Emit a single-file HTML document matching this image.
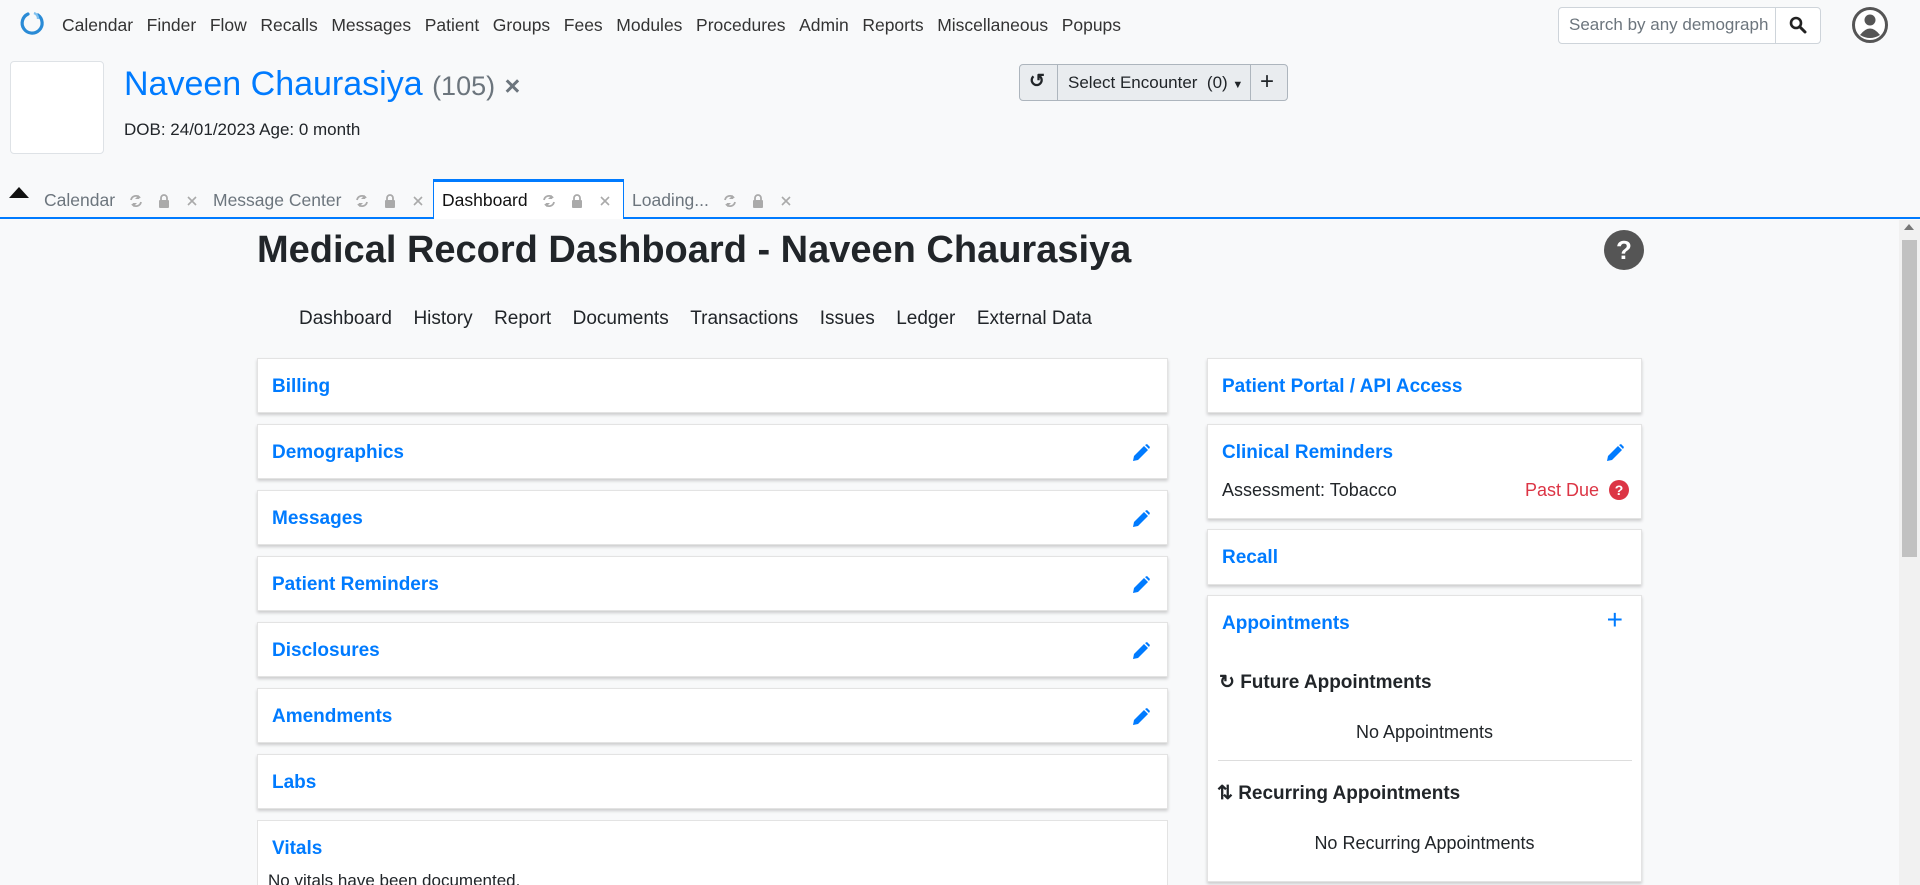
<!DOCTYPE html>
<html style="overflow:hidden;height:885px"><head><meta charset="utf-8"><style>
*{box-sizing:border-box;margin:0;padding:0}
body{width:1920px;height:885px;overflow:hidden;background:#f8f9fa;font-family:"Liberation Sans",sans-serif;color:#212529;position:relative}
.a{position:absolute;white-space:nowrap}
.nav span{margin-right:13.6px;font-size:17.5px;color:#333}
.card{position:absolute;background:#fff;border:1px solid #e3e3e3;box-shadow:0 2px 3px rgba(0,0,0,.18)}
.ct{position:absolute;left:14px;top:17px;font-size:19px;font-weight:bold;color:#007bff}
.pen{position:absolute;right:16px;top:18px}
.tab{position:absolute;top:190px;font-size:17.5px;color:#6c757d;display:flex;align-items:center}
.tab svg{margin-left:14px}
.sub span{margin-right:21.5px}
</style></head><body>
<svg width="0" height="0" style="position:absolute"><defs>
<g id="ref"><path d="M2 6 A5 5 0 0 1 11 4 M12 8 A5 5 0 0 1 3 10" fill="none" stroke="#aaa" stroke-width="1.8"/><path d="M10 1v4h-4z M4 13v-4h4z" fill="#aaa"/></g>
<g id="lock"><path d="M4 6V4a3 3 0 0 1 6 0v2" fill="none" stroke="#aaa" stroke-width="1.8"/><rect x="2" y="6" width="10" height="8" rx="1" fill="#aaa"/></g>
<g id="x"><path d="M3 3l8 8M11 3l-8 8" stroke="#aaa" stroke-width="1.6"/></g>
</defs></svg>
<svg class="a" style="left:19px;top:10px" width="26" height="26" viewBox="0 0 26 26"><path d="M9 4 A10 10 0 1 0 19 5" fill="none" stroke="#2a8bd6" stroke-width="3.2" stroke-linecap="round"/><path d="M15 3 A6 6 0 0 1 19 9" fill="none" stroke="#7fc0ee" stroke-width="2.4"/></svg>
<div class="a nav" style="left:62px;top:15px"><span>Calendar</span><span>Finder</span><span>Flow</span><span>Recalls</span><span>Messages</span><span>Patient</span><span>Groups</span><span>Fees</span><span>Modules</span><span>Procedures</span><span>Admin</span><span>Reports</span><span>Miscellaneous</span><span>Popups</span></div>
<div class="a" style="left:1558px;top:7px;width:263px;height:37px;border:1px solid #ced4da;border-radius:4px;background:#fff"></div>
<div class="a" style="left:1569px;top:15px;font-size:17px;color:#6c757d;width:200px;overflow:hidden">Search by any demograph</div>
<div class="a" style="left:1775px;top:7px;width:46px;height:37px;border-left:1px solid #ced4da"></div>
<svg class="a" style="left:1789px;top:16px" width="18" height="18" viewBox="0 0 18 18"><circle cx="7" cy="7" r="5" fill="none" stroke="#222" stroke-width="2.6"/><path d="M11 11l5 5" stroke="#222" stroke-width="3" stroke-linecap="round"/></svg>
<svg class="a" style="left:1851px;top:6px" width="38" height="38" viewBox="0 0 38 38"><circle cx="19" cy="19" r="16.5" fill="#fff" stroke="#555" stroke-width="3"/><circle cx="19" cy="14" r="5.5" fill="#555"/><path d="M9 29 Q19 16 29 29 Q19 35 9 29z" fill="#555"/></svg>
<div class="a" style="left:10px;top:61px;width:94px;height:93px;background:#fff;border:1px solid #dee2e6;border-radius:4px"></div>
<div class="a" style="left:124px;top:65px;font-size:34px;color:#007bff">Naveen Chaurasiya <span style="color:#6c757d;font-size:27px">(105)</span> <span style="color:#6c757d;font-size:27px;font-weight:bold">×</span></div>
<div class="a" style="left:124px;top:120px;font-size:17px">DOB: 24/01/2023 Age: 0 month</div>
<div class="a" style="left:1019px;top:64px;width:269px;height:37px;border:1px solid #adb5bd;border-radius:4px;background:#e9ecef"></div>
<div class="a" style="left:1057px;top:64px;height:37px;border-left:1px solid #adb5bd"></div>
<div class="a" style="left:1250px;top:64px;height:37px;border-left:1px solid #adb5bd"></div>
<div class="a" style="left:1029px;top:70px;font-size:19px;font-weight:bold">↺</div>
<div class="a" style="left:1068px;top:73px;font-size:17px">Select Encounter&nbsp; (0) <span style="font-size:11px">▼</span></div>
<div class="a" style="left:1260px;top:68px;font-size:24px">+</div>
<div class="a" style="left:0;top:217px;width:1920px;height:2px;background:#007bff"></div>
<div class="a" style="left:433px;top:179px;width:191px;height:40px;background:#fff;border:1px solid #007bff;border-top:3px solid #007bff;border-bottom:none"></div>
<div class="a" style="left:9px;top:187px;width:0;height:0;border-left:10px solid transparent;border-right:10px solid transparent;border-bottom:11px solid #111"></div>
<div class="tab" style="left:44px">Calendar<svg width="14" height="14"><use href="#ref"/></svg><svg width="14" height="14"><use href="#lock"/></svg><svg width="14" height="14"><use href="#x"/></svg></div>
<div class="tab" style="left:213px">Message Center<svg width="14" height="14"><use href="#ref"/></svg><svg width="14" height="14"><use href="#lock"/></svg><svg width="14" height="14"><use href="#x"/></svg></div>
<div class="tab" style="left:442px;color:#111">Dashboard<svg width="14" height="14"><use href="#ref"/></svg><svg width="14" height="14"><use href="#lock"/></svg><svg width="14" height="14"><use href="#x"/></svg></div>
<div class="tab" style="left:632px">Loading...<svg width="14" height="14"><use href="#ref"/></svg><svg width="14" height="14"><use href="#lock"/></svg><svg width="14" height="14"><use href="#x"/></svg></div>
<div class="a" style="left:1899px;top:220px;width:21px;height:665px;background:#f1f1f1"></div>
<div class="a" style="left:1902px;top:240px;width:15px;height:317px;background:#c1c1c1"></div>
<div class="a" style="left:1904px;top:224px;width:0;height:0;border-left:5px solid transparent;border-right:5px solid transparent;border-bottom:6px solid #777"></div>
<div class="a" style="left:257px;top:229px;font-size:38px;font-weight:600">Medical Record Dashboard - Naveen Chaurasiya</div>
<div class="a" style="left:1604px;top:230px;width:40px;height:40px;border-radius:50%;background:#555;color:#fff;font-size:26px;font-weight:bold;text-align:center;line-height:40px">?</div>
<div class="a sub" style="left:299px;top:308px;font-size:19px"><span>Dashboard</span><span>History</span><span>Report</span><span>Documents</span><span>Transactions</span><span>Issues</span><span>Ledger</span><span>External Data</span></div>
<div class="card" style="left:257px;top:358px;width:911px;height:55px"><div class="ct">Billing</div></div>
<div class="card" style="left:257px;top:424px;width:911px;height:55px"><div class="ct">Demographics</div><svg class="pen" width="20" height="20" viewBox="0 0 20 20"><path d="M2 18l1-5L13 3l4 4L7 17z M14 2l2-1 3 3-1 2z" fill="#007bff"/></svg></div>
<div class="card" style="left:257px;top:490px;width:911px;height:55px"><div class="ct">Messages</div><svg class="pen" width="20" height="20" viewBox="0 0 20 20"><path d="M2 18l1-5L13 3l4 4L7 17z M14 2l2-1 3 3-1 2z" fill="#007bff"/></svg></div>
<div class="card" style="left:257px;top:556px;width:911px;height:55px"><div class="ct">Patient Reminders</div><svg class="pen" width="20" height="20" viewBox="0 0 20 20"><path d="M2 18l1-5L13 3l4 4L7 17z M14 2l2-1 3 3-1 2z" fill="#007bff"/></svg></div>
<div class="card" style="left:257px;top:622px;width:911px;height:55px"><div class="ct">Disclosures</div><svg class="pen" width="20" height="20" viewBox="0 0 20 20"><path d="M2 18l1-5L13 3l4 4L7 17z M14 2l2-1 3 3-1 2z" fill="#007bff"/></svg></div>
<div class="card" style="left:257px;top:688px;width:911px;height:55px"><div class="ct">Amendments</div><svg class="pen" width="20" height="20" viewBox="0 0 20 20"><path d="M2 18l1-5L13 3l4 4L7 17z M14 2l2-1 3 3-1 2z" fill="#007bff"/></svg></div>
<div class="card" style="left:257px;top:754px;width:911px;height:55px"><div class="ct">Labs</div></div>
<div class="card" style="left:257px;top:820px;width:911px;height:65px;border-bottom:none;box-shadow:none"><div class="ct">Vitals</div><div class="a" style="left:10px;top:50px;font-size:17px">No vitals have been documented.</div></div>
<div class="card" style="left:1207px;top:358px;width:435px;height:55px"><div class="ct">Patient Portal / API Access</div></div>
<div class="card" style="left:1207px;top:424px;width:435px;height:95px"><div class="ct">Clinical Reminders</div><svg class="pen" width="20" height="20" viewBox="0 0 20 20"><path d="M2 18l1-5L13 3l4 4L7 17z M14 2l2-1 3 3-1 2z" fill="#007bff"/></svg>
<div class="a" style="left:14px;top:55px;font-size:18px">Assessment: Tobacco</div>
<div class="a" style="left:317px;top:55px;font-size:18px;color:#dc3545">Past Due</div>
<div class="a" style="left:401px;top:55px;width:20px;height:20px;border-radius:50%;background:#dc3545;color:#fff;font-size:14px;font-weight:bold;text-align:center;line-height:20px">?</div></div>
<div class="card" style="left:1207px;top:529px;width:435px;height:56px"><div class="ct">Recall</div></div>
<div class="card" style="left:1207px;top:595px;width:435px;height:287px"><div class="ct">Appointments</div><div class="a" style="right:18px;top:8px;font-size:28px;color:#007bff">+</div>
<div class="a" style="left:11px;top:75px;font-size:19px;font-weight:bold">↻ Future Appointments</div>
<div class="a" style="left:0;width:100%;text-align:center;top:126px;font-size:18px">No Appointments</div>
<div class="a" style="left:10px;top:164px;width:414px;border-top:1px solid #ddd"></div>
<div class="a" style="left:9px;top:186px;font-size:19px;font-weight:bold">⇅ Recurring Appointments</div>
<div class="a" style="left:0;width:100%;text-align:center;top:237px;font-size:18px">No Recurring Appointments</div></div>
</body></html>
